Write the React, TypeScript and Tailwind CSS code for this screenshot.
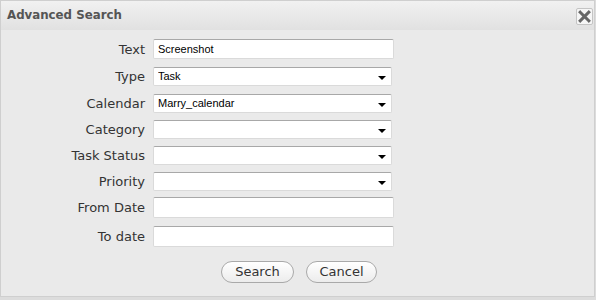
import React from 'react';

const labelFont = { fontFamily: '"DejaVu Sans", Verdana, sans-serif' };
const fieldFont = { fontFamily: '"Liberation Sans", Tahoma, Arial, sans-serif' };

type Row = {
  label: string;
  kind: 'input' | 'select';
  value?: string;
  mt: string;
  h: string;
};

const rows: Row[] = [
  { label: 'Text', kind: 'input', value: 'Screenshot', mt: 'mt-[9px]', h: 'h-[20px]' },
  { label: 'Type', kind: 'select', value: 'Task', mt: 'mt-[8px]', h: 'h-[19px]' },
  { label: 'Calendar', kind: 'select', value: 'Marry_calendar', mt: 'mt-[8px]', h: 'h-[19px]' },
  { label: 'Category', kind: 'select', mt: 'mt-[7px]', h: 'h-[19px]' },
  { label: 'Task Status', kind: 'select', mt: 'mt-[7px]', h: 'h-[19px]' },
  { label: 'Priority', kind: 'select', mt: 'mt-[7px]', h: 'h-[19px]' },
  { label: 'From Date', kind: 'input', mt: 'mt-[6px]', h: 'h-[21px]' },
  { label: 'To date', kind: 'input', mt: 'mt-[8px]', h: 'h-[21px]' },
];

const Field: React.FC<{ row: Row }> = ({ row }) => {
  const width = row.kind === 'input' ? 'w-[241px]' : 'w-[239px]';
  return (
    <div
      className={`${width} ${row.h} bg-white border border-[#dadada] border-t-[#a8a8a8] rounded-[2px] flex items-center pl-[4px] pr-[5px] text-[11px] text-black`}
      style={fieldFont}
    >
      <span className="flex-1 truncate">{row.value ?? ''}</span>
      {row.kind === 'select' && (
        <span className="w-0 h-0 border-l-[4px] border-r-[4px] border-t-[4px] border-l-transparent border-r-transparent border-t-black mt-[2px]" />
      )}
    </div>
  );
};

const Button: React.FC<{ children: React.ReactNode; w: string }> = ({ children, w }) => (
  <button
    className={`${w} h-[22px] rounded-full border border-[#a9a9a9] bg-gradient-to-b from-white to-[#ececec] text-[13px] text-[#333] flex items-center justify-center`}
    style={labelFont}
  >
    {children}
  </button>
);

const App: React.FC = () => {
  return (
    <div className="w-[596px] h-[300px] bg-[#dcdcdc]">
      <div className="w-[595px] h-[297px] border border-[#cfcfcf] bg-[#eaeaea] flex flex-col">
        {/* Header */}
        <div className="h-[29px] bg-gradient-to-b from-[#f1f1f1] to-[#e1e1e1] flex items-center justify-between pl-[6px] pr-[1px] shrink-0">
          <span className="text-[11.8px] font-bold text-[#555] mt-[1px]" style={labelFont}>
            Advanced Search
          </span>
          <div className="w-[17px] h-[17px] border border-[#c4c4c4] rounded-[2px] bg-[#f6f6f6] flex items-center justify-center mt-[1px]">
            <svg width="13" height="13" viewBox="0 0 13 13">
              <path d="M2.2 2.2 L10.8 10.8 M10.8 2.2 L2.2 10.8" stroke="#666" strokeWidth="3" strokeLinecap="square" />
            </svg>
          </div>
        </div>

        {/* Form */}
        <div className="flex flex-col">
          {rows.map((row) => (
            <div key={row.label} className={`flex items-center ${row.mt}`}>
              <div className="w-[144px] text-right text-[13px] text-[#333] leading-none" style={labelFont}>
                {row.label}
              </div>
              <div className="ml-[8px]">
                <Field row={row} />
              </div>
            </div>
          ))}
          <div className="flex justify-start gap-[12px] mt-[14px] pl-[220px]">
            <Button w="w-[73px]">Search</Button>
            <Button w="w-[71px]">Cancel</Button>
          </div>
        </div>
      </div>
    </div>
  );
};

export default App;
